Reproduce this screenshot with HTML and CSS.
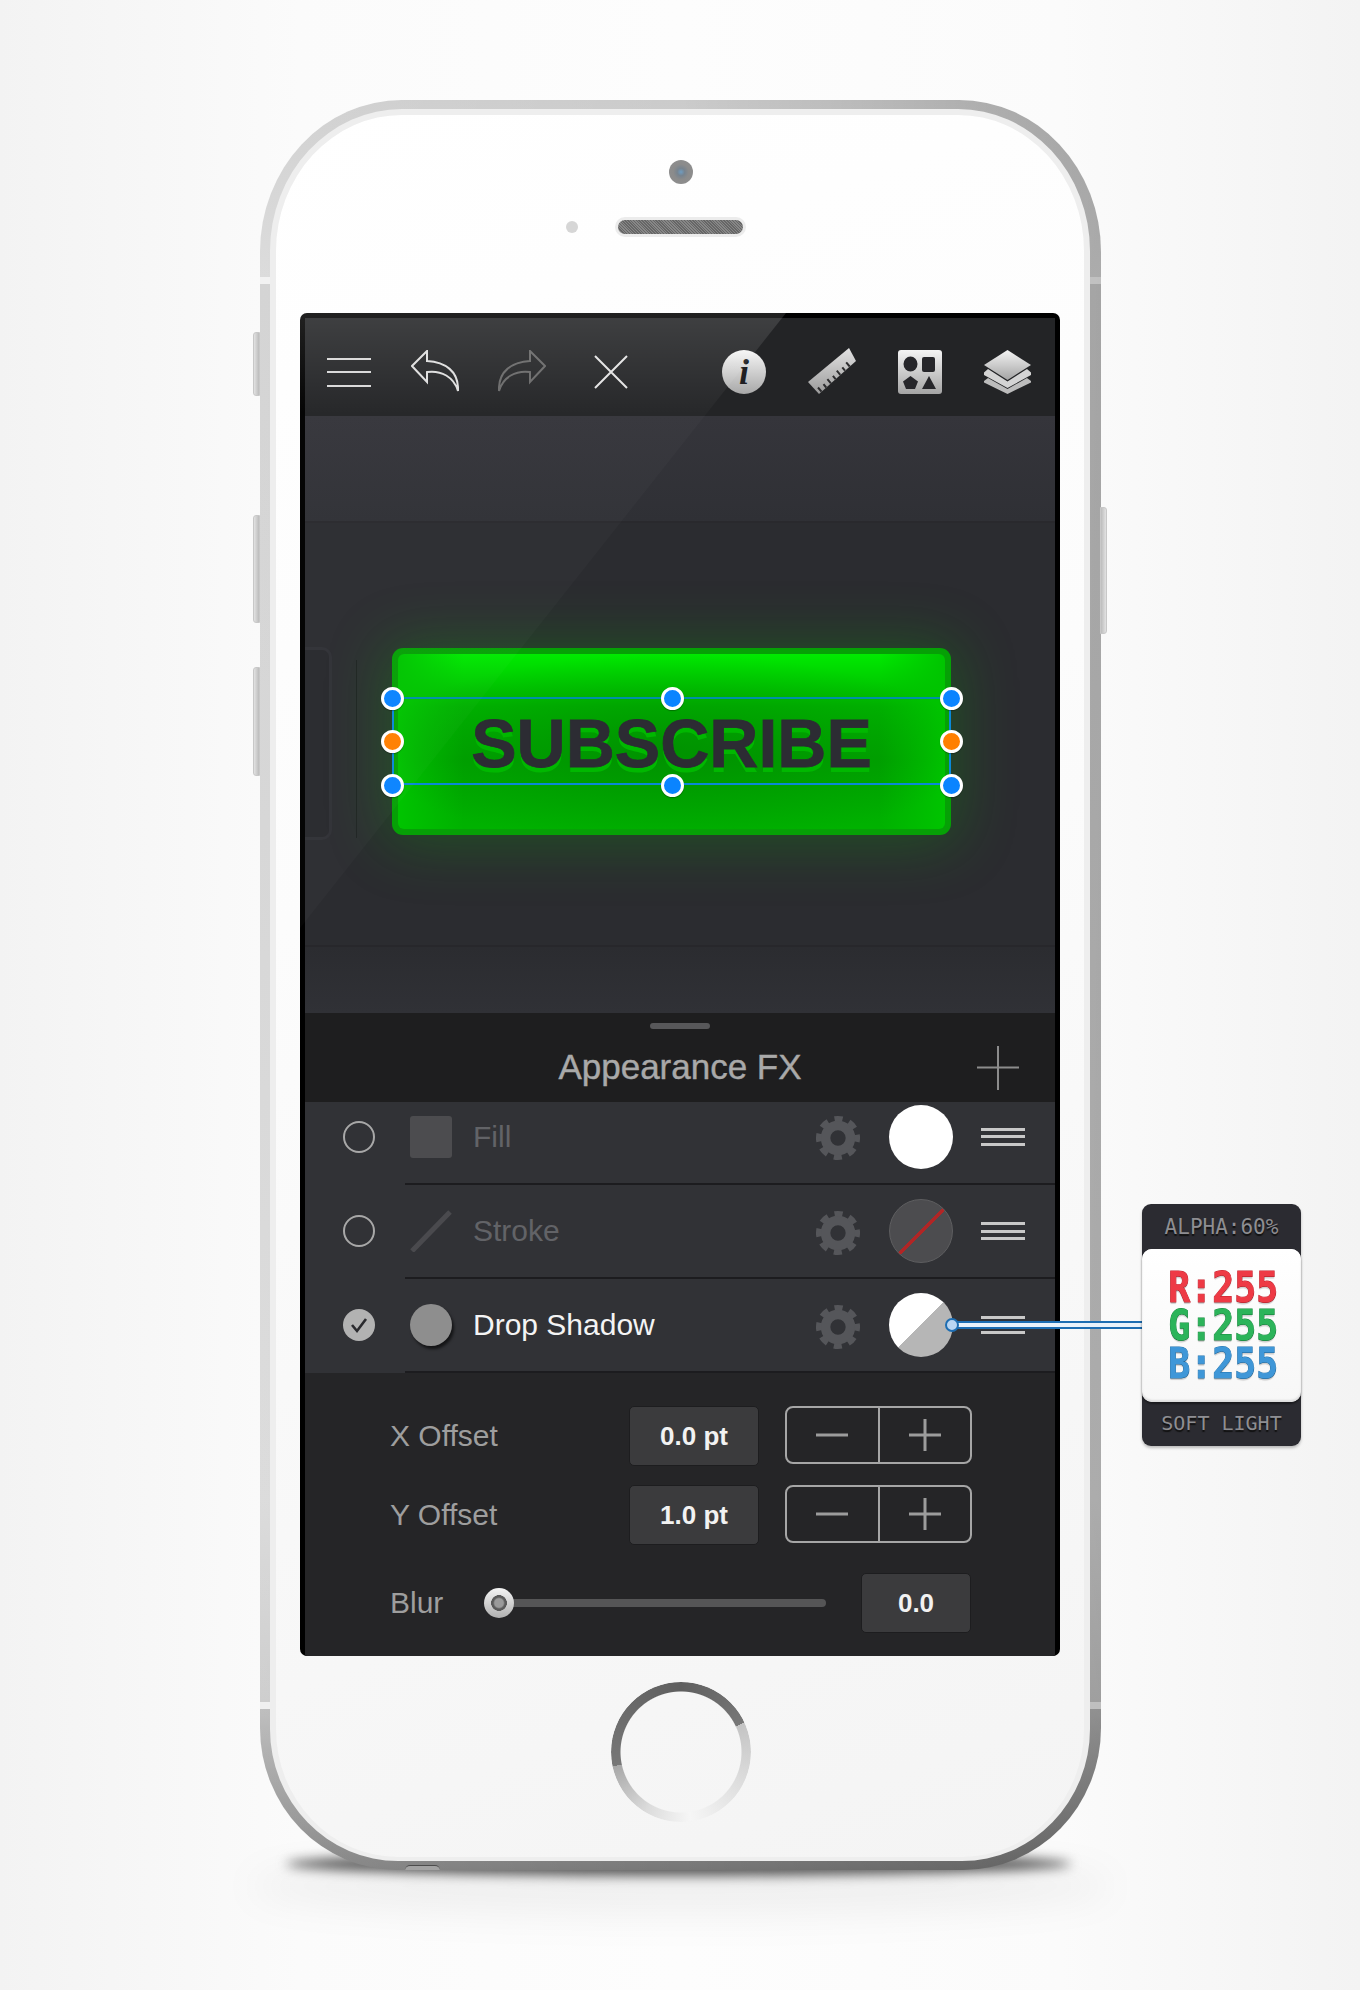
FILE: index.html
```html
<!DOCTYPE html>
<html lang="en">
<head>
    <meta charset="UTF-8">
    <title>Appearance FX</title>
    <link rel="stylesheet" href="styles.css">
</head>
<body>

<svg class="defs" width="0" height="0">
    <defs>
        <linearGradient id="chrome" x1="0" y1="0" x2="0" y2="1">
            <stop offset="0" stop-color="#f4f4f4"/>
            <stop offset="1" stop-color="#a4a4a4"/>
        </linearGradient>
        <linearGradient id="rulerfill" gradientUnits="userSpaceOnUse" x1="0" y1="0" x2="0" y2="46">
            <stop offset="0" stop-color="#e2e2e2"/>
            <stop offset="1" stop-color="#9a9a9a"/>
        </linearGradient>
        <symbol id="gear" viewBox="0 0 48 48">
            <circle cx="24" cy="24" r="13" fill="none" stroke="currentColor" stroke-width="10"/>
            <circle cx="24" cy="24" r="20" fill="none" stroke="currentColor" stroke-width="6" stroke-dasharray="8.5 7.2" stroke-dashoffset="4.25"/>
        </symbol>
        <symbol id="plus" viewBox="0 0 32 32">
            <path d="M0 16H32M16 0V32" fill="none" stroke="currentColor" stroke-width="3"/>
        </symbol>
        <symbol id="minus" viewBox="0 0 32 32">
            <path d="M0 16H32" fill="none" stroke="currentColor" stroke-width="3"/>
        </symbol>
        <symbol id="arrow" viewBox="0 0 48 42">
            <path d="M16 1L1 16L16 32V22C30 20 43 27 47 41C48 21 34 12 16 11Z" fill="none" stroke="currentColor" stroke-width="2"/>
        </symbol>
    </defs>
</svg>

<div class="stage">
    <div class="phone">
        <span class="side-btn mute"></span>
        <span class="side-btn vol-up"></span>
        <span class="side-btn vol-down"></span>
        <span class="side-btn power"></span>
        <span class="jack"></span>

        <div class="bezel">
            <div class="camera"></div>
            <div class="speaker"></div>

            <div class="screen">
                <div class="toolbar">
                    <div class="tool-group">
                        <div class="menu-icon"><i></i><i></i><i></i></div>
                        <svg class="arrow-icon"><use href="#arrow"/></svg>
                        <svg class="arrow-icon redo"><use href="#arrow"/></svg>
                        <svg class="close-icon" viewBox="0 0 34 34"><path d="M1 1L33 33M33 1L1 33" stroke="#e4e4e4" stroke-width="2"/></svg>
                    </div>
                    <div class="tool-group right">
                        <div class="info-icon">i</div>
                        <svg class="ruler-icon" viewBox="0 0 48 46">
                            <path d="M0 34L41 0L48 13L11 46Z" fill="url(#rulerfill)"/>
                            <path d="M13.5 43.7L10 39.5M18.2 39.5L15.5 36.2M22.9 35.3L19.4 31.1M27.6 31.1L24.9 27.8M32.3 26.9L28.8 22.7M37 22.7L34.3 19.4M41.7 18.5L38.2 14.3" stroke="#2c2c2e" stroke-width="2"/>
                        </svg>
                        <svg class="shapes-icon" viewBox="0 0 44 44">
                            <rect width="44" height="44" rx="3" fill="url(#chrome)"/>
                            <ellipse cx="12.5" cy="14" rx="7" ry="7.5" fill="#26262a"/>
                            <rect x="24" y="7" width="13" height="15" rx="2" fill="#26262a"/>
                            <path d="M12.5 26L20 31.5L17 39H8L5 31.5Z" fill="#26262a"/>
                            <path d="M31 26L38 39H24Z" fill="#26262a"/>
                        </svg>
                        <svg class="layers-icon" viewBox="0 0 47 44">
                            <path d="M23.5 0L47 15L23.5 30L0 15Z" fill="url(#chrome)"/>
                            <path d="M4 19L23.5 31.5L43 19L47 22.5V25L23.5 38L0 25V22.5Z" fill="#d4d4d4"/>
                            <path d="M4 28L23.5 39L43 28L47 31V32.5L23.5 44L0 32.5V31Z" fill="#bcbcbc"/>
                        </svg>
                    </div>
                </div>

                <div class="canvas">
                    <div class="side-shape"></div>
                    <div class="side-rule"></div>
                    <div class="band top"></div>
                    <div class="artboard">
                        <div class="sub-btn">
                            <div class="sub-face">SUBSCRIBE</div>
                            <div class="sel-box"></div>
                            <span class="handle h1"></span><span class="handle h2"></span><span class="handle h3"></span>
                            <span class="handle orange h4"></span><span class="handle orange h5"></span>
                            <span class="handle h6"></span><span class="handle h7"></span><span class="handle h8"></span>
                        </div>
                    </div>
                    <div class="band bottom"></div>
                </div>

                <div class="panel-head">
                    <span class="grip"></span>
                    <h2>Appearance FX</h2>
                    <svg class="add-icon" viewBox="0 0 42 44"><path d="M0 21.5H42M21 0V44" stroke="#8c8c8c" stroke-width="2"/></svg>
                </div>

                <div class="fx-list">
                    <div class="fx-row first">
                        <div class="fx-radio"></div>
                        <div class="fx-body">
                            <div class="fx-thumb"><span class="thumb-fill"></span></div>
                            <span class="fx-label">Fill</span>
                            <svg class="gear"><use href="#gear"/></svg>
                            <span class="swatch white"></span>
                            <div class="drag"><i></i><i></i><i></i></div>
                        </div>
                    </div>
                    <div class="fx-row">
                        <div class="fx-radio"></div>
                        <div class="fx-body">
                            <div class="fx-thumb">
                                <svg class="thumb-stroke" viewBox="0 0 42 42"><path d="M2 41L40 2" stroke="#4a4a4e" stroke-width="5"/></svg>
                            </div>
                            <span class="fx-label">Stroke</span>
                            <svg class="gear"><use href="#gear"/></svg>
                            <span class="swatch none"></span>
                            <div class="drag"><i></i><i></i><i></i></div>
                        </div>
                    </div>
                    <div class="fx-row">
                        <div class="fx-radio on">
                            <svg viewBox="0 0 32 32"><path d="M9 16L14 22L23 10" fill="none" stroke="#2a2a2e" stroke-width="2.6"/></svg>
                        </div>
                        <div class="fx-body">
                            <div class="fx-thumb"><span class="thumb-shadow"></span></div>
                            <span class="fx-label active">Drop Shadow</span>
                            <svg class="gear"><use href="#gear"/></svg>
                            <span class="swatch split"></span>
                            <div class="drag"><i></i><i></i><i></i></div>
                        </div>
                    </div>
                </div>

                <div class="settings">
                    <div class="set-row">
                        <span class="set-label">X Offset</span>
                        <div class="value">0.0 pt</div>
                        <div class="stepper">
                            <div class="step"><svg><use href="#minus"/></svg></div>
                            <div class="step"><svg><use href="#plus"/></svg></div>
                        </div>
                    </div>
                    <div class="set-row">
                        <span class="set-label">Y Offset</span>
                        <div class="value">1.0 pt</div>
                        <div class="stepper">
                            <div class="step"><svg><use href="#minus"/></svg></div>
                            <div class="step"><svg><use href="#plus"/></svg></div>
                        </div>
                    </div>
                    <div class="set-row blur">
                        <span class="set-label short">Blur</span>
                        <div class="slider"><span class="knob"></span></div>
                        <div class="value small">0.0</div>
                    </div>
                </div>
                <div class="glare"></div>
            </div>

            <div class="home"><div class="home-ring"></div></div>
        </div>
    </div>

    <div class="connector"><span class="connector-dot"></span></div>

    <div class="tip">
        <div class="tip-head">ALPHA:60%</div>
        <div class="tip-card">
            <div class="rgb r">R:255</div>
            <div class="rgb g">G:255</div>
            <div class="rgb b">B:255</div>
        </div>
        <div class="tip-foot">SOFT LIGHT</div>
    </div>
</div>

</body>
</html>
```

FILE: styles.css
```css
html, body {
    margin: 0;
    height: 1990px;
    overflow: hidden;
}
body {
    background: linear-gradient(90deg, #f3f3f3 0, #fbfbfb 22%, #fdfdfd 50%, #fbfbfb 78%, #f3f3f3 100%);
    font-family: "Liberation Sans", Arial, sans-serif;
}
.defs {
    position: absolute;
}
.stage {
    position: relative;
    height: 1990px;
    padding: 100px 0 0 260px;
    box-sizing: border-box;
}

/* phone body */
.phone {
    position: relative;
    width: 841px;
    height: 1770px;
    box-sizing: border-box;
    padding: 9px 11px 9px 10px;
    border-radius: 142px 142px 138px 138px / 152px 152px 142px 142px;
    background:
        linear-gradient(90deg, rgba(255, 255, 255, 0.14) 0, rgba(255, 255, 255, 0) 50%, rgba(0, 0, 0, 0.2) 100%),
        linear-gradient(180deg, #cbcbcb 0, #d6d6d6 177px, #f0f0f0 177px, #f0f0f0 184px, #cdcdcd 184px, #d6d6d6 1400px, #c6c6c6 1602px, #eeeeee 1602px, #eeeeee 1609px, #b4b4b4 1609px, #8c8c8c 1720px, #777 100%);
}
.phone::before {
    content: "";
    position: absolute;
    left: 26px;
    right: 30px;
    bottom: -6px;
    height: 24px;
    border-radius: 50%;
    background: #5a5a5a;
    filter: blur(6px);
    z-index: -1;
}
.phone::after {
    content: "";
    position: absolute;
    left: -10px;
    right: -10px;
    bottom: -46px;
    height: 60px;
    background: rgba(0, 0, 0, 0.05);
    border-radius: 50%;
    filter: blur(18px);
    z-index: -2;
}
.side-btn {
    position: absolute;
    width: 7px;
    left: -7px;
    background: linear-gradient(90deg, #e2e2e2, #bcbcbc);
    border-radius: 3px 0 0 3px;
    border: 1px solid #c8c8c8;
    box-sizing: border-box;
}
.mute { top: 232px; height: 64px; }
.vol-up { top: 415px; height: 108px; }
.vol-down { top: 567px; height: 109px; }
.power {
    left: auto;
    right: -6px;
    top: 407px;
    height: 127px;
    border-radius: 0 3px 3px 0;
    background: linear-gradient(90deg, #bcbcbc, #e2e2e2);
}
.jack {
    position: absolute;
    left: 145px;
    bottom: 0;
    width: 35px;
    height: 5px;
    border-radius: 18px 18px 0 0;
    background: #a2a2a2;
    border-top: 1px solid #4c4c4c;
    box-sizing: border-box;
}
.bezel {
    height: 100%;
    box-sizing: border-box;
    border: solid #eeeeee;
    border-width: 6px 6px 4px;
    border-radius: 132px 132px 128px 128px / 142px 142px 132px 132px;
    background: linear-gradient(160deg, #ffffff 0, #fcfcfc 40%, #f4f4f4 100%);
    display: flex;
    flex-direction: column;
    align-items: center;
    padding-top: 45px;
}
.camera {
    width: 24px;
    height: 24px;
    margin-left: 2px;
    border-radius: 50%;
    background: radial-gradient(circle, #6f9cc0 0, #77838e 22%, #8b8b8b 45%, #909090 100%);
}
.speaker {
    position: relative;
    width: 125px;
    height: 14px;
    margin-top: 33px;
    border: 3px solid #ececec;
    border-radius: 10px;
    background: repeating-linear-gradient(45deg, #666 0, #666 1px, #878787 1px, #878787 2px);
    flex: none;
}
.speaker::before {
    content: "";
    position: absolute;
    left: -52px;
    top: 1px;
    width: 12px;
    height: 12px;
    border-radius: 50%;
    background: #d6d6d6;
}

/* screen */
.screen {
    position: relative;
    flex: none;
    width: 760px;
    height: 1343px;
    margin-top: 76px;
    box-sizing: border-box;
    padding: 5px 5px 0;
    background: #000;
    border-radius: 7px;
    display: flex;
    flex-direction: column;
    overflow: hidden;
}
.glare {
    position: absolute;
    left: 0;
    top: 0;
    width: 486px;
    height: 615px;
    clip-path: polygon(0 0, 100% 0, 0 100%);
    background: linear-gradient(180deg, rgba(255, 255, 255, 0.13) 0, rgba(255, 255, 255, 0.02) 100px, rgba(255, 255, 255, 0.02) 100%);
    pointer-events: none;
}
.toolbar {
    height: 98px;
    flex: none;
    box-sizing: border-box;
    background: #232426;
    display: flex;
    justify-content: space-between;
    align-items: center;
    padding: 10px 24px 0 22px;
}
.tool-group {
    display: flex;
    align-items: center;
}
.menu-icon {
    width: 44px;
    display: flex;
    flex-direction: column;
    gap: 11.5px;
}
.menu-icon i {
    height: 2px;
    background: #d8d8d8;
}
.arrow-icon {
    width: 48px;
    height: 42px;
    margin-left: 40px;
    color: #dedede;
    margin-top: -2px;
}
.redo {
    transform: scaleX(-1);
    color: #686868;
    margin-left: 39px;
}
.close-icon {
    width: 34px;
    height: 34px;
    margin-left: 48px;
}
.tool-group.right {
    gap: 42px;
}
.info-icon {
    width: 44px;
    height: 44px;
    border-radius: 50%;
    background: linear-gradient(180deg, #f6f6f6, #a8a8a8);
    color: #1f1f22;
    font: italic bold 36px/44px "Liberation Serif", serif;
    text-align: center;
}
.ruler-icon {
    width: 48px;
    height: 46px;
    margin-top: -2px;
}
.shapes-icon {
    width: 44px;
    height: 44px;
}
.layers-icon {
    width: 47px;
    height: 44px;
}

/* canvas */
.canvas {
    position: relative;
    height: 597px;
    flex: none;
    background: #2d2e32;
    display: flex;
    flex-direction: column;
}
.band {
    flex: none;
}
.band.top {
    height: 107px;
    background: linear-gradient(180deg, #35353b, #2f3035);
    border-bottom: 2px solid #29292d;
    box-sizing: border-box;
}
.band.bottom {
    height: 68px;
    background: linear-gradient(180deg, #2b2c30, #303136);
    border-top: 2px solid #27272b;
    box-sizing: border-box;
}
.artboard {
    flex: 1;
    padding: 125px 0 0 87px;
    background: #2b2c30;
}
.side-shape {
    position: absolute;
    left: 0;
    top: 231px;
    width: 27px;
    height: 193px;
    background: #28292d;
    border: 3px solid #303136;
    border-left: 0;
    border-radius: 0 10px 10px 0;
    box-sizing: border-box;
}
.side-rule {
    position: absolute;
    left: 51px;
    top: 244px;
    width: 1px;
    height: 178px;
    background: #1f2023;
}
.sub-btn {
    position: relative;
    width: 559px;
    height: 187px;
    box-sizing: border-box;
    padding: 6px;
    border-radius: 11px;
    background: #06a006;
    box-shadow: 0 2px 60px 6px rgba(0, 190, 0, 0.26);
}
.sub-face {
    height: 100%;
    border-radius: 6px;
    background:
        radial-gradient(ellipse 55% 55% at 50% 55%, rgba(0, 130, 0, 0.55), rgba(0, 130, 0, 0) 100%),
        linear-gradient(90deg, #00c400 0, rgba(0, 196, 0, 0) 12%, rgba(0, 196, 0, 0) 88%, #00c400 100%),
        linear-gradient(180deg, #00ea00 0, #00b400 30%, #00a400 60%, #00b200 100%);
    color: #2c2c33;
    font-size: 68px;
    font-weight: bold;
    line-height: 178px;
    text-align: center;
    -webkit-text-stroke: 0.8px #2c2c33;
    text-shadow: 0 5px 0 #00b800;
    box-sizing: border-box;
}
.sel-box {
    position: absolute;
    left: 0;
    right: 0;
    top: 49px;
    height: 88px;
    box-sizing: border-box;
    border: 2px solid #0a88d8;
    border-top-color: #0090a8;
}
.handle {
    position: absolute;
    width: 23px;
    height: 23px;
    box-sizing: border-box;
    border: 3px solid #fff;
    border-radius: 50%;
    background: #0a84ff;
    margin: -11.5px 0 0 -11.5px;
    box-shadow: 0 1px 1px rgba(0, 0, 0, 0.3);
}
.handle.orange {
    background: #ff7f00;
}
.h1 { left: 0; top: 50px; }
.h2 { left: 280px; top: 50px; }
.h3 { left: 559px; top: 50px; }
.h4 { left: 0; top: 93px; }
.h5 { left: 559px; top: 93px; }
.h6 { left: 0; top: 137px; }
.h7 { left: 280px; top: 137px; }
.h8 { left: 559px; top: 137px; }

/* panel header */
.panel-head {
    position: relative;
    height: 89px;
    flex: none;
    background: #1e1e1f;
    display: flex;
    align-items: center;
    justify-content: center;
}
.panel-head h2 {
    margin: 18px 0 0;
    font-size: 35px;
    font-weight: normal;
    color: #a9a9a9;
    -webkit-text-stroke: 0.4px #a9a9a9;
}
.grip {
    position: absolute;
    left: 345px;
    top: 10px;
    width: 60px;
    height: 6px;
    border-radius: 3px;
    background: #58585a;
}
.add-icon {
    position: absolute;
    left: 672px;
    top: 33px;
    width: 42px;
    height: 44px;
}

/* effect rows */
.fx-list {
    flex: none;
    background: #313236;
}
.fx-row {
    display: flex;
    height: 94px;
}
.fx-row.first {
    height: 83px;
}
.fx-row.first .fx-body {
    padding-bottom: 12px;
}
.fx-row.first .fx-radio {
    margin-top: 19px;
}
.fx-radio {
    flex: none;
    width: 32px;
    height: 32px;
    box-sizing: border-box;
    border: 2px solid #a8a8a8;
    border-radius: 50%;
    margin: 30px 30px 0 38px;
}
.fx-radio.on {
    background: #b2b2b2;
    border: 0;
}
.fx-radio svg {
    display: block;
}
.fx-body {
    flex: 1;
    display: flex;
    align-items: center;
    box-sizing: border-box;
    border-bottom: 2px solid #1c1c1f;
    padding-right: 30px;
}
.fx-thumb {
    flex: none;
    width: 42px;
    height: 42px;
    margin: 0 21px 0 5px;
}
.thumb-fill {
    display: block;
    height: 100%;
    background: #4c4c4f;
    border-radius: 3px;
}
.thumb-stroke {
    display: block;
}
.thumb-shadow {
    display: block;
    height: 100%;
    border-radius: 50%;
    background: #8e8e8e;
    box-shadow: 2px 3px 3px rgba(0, 0, 0, 0.6);
}
.fx-label {
    flex: 1;
    font-size: 30px;
    color: #626367;
}
.fx-label.active {
    color: #f4f4f4;
}
.gear {
    flex: none;
    width: 46px;
    height: 46px;
    color: #55565a;
    margin-top: 3px;
}
.swatch {
    flex: none;
    width: 64px;
    height: 64px;
    margin: 0 28px;
    border-radius: 50%;
    box-sizing: border-box;
}
.swatch.white {
    background: #fff;
}
.swatch.none {
    border: 1px solid #5e5e60;
    background: linear-gradient(135deg, #4c4c4f 48.5%, #b12626 48.5%, #b12626 52.5%, #4c4c4f 52.5%);
}
.swatch.split {
    background: linear-gradient(135deg, #fff 50%, #b6b6b6 50%);
}
.drag {
    flex: none;
    width: 44px;
    display: flex;
    flex-direction: column;
    gap: 4.5px;
}
.drag i {
    height: 3px;
    background: #c8c8c8;
}

/* settings */
.settings {
    flex: 1;
    background: #252527;
    padding: 33px 0 0 85px;
    display: flex;
    flex-direction: column;
    gap: 19px;
}
.set-row {
    display: flex;
    height: 60px;
    align-items: center;
}
.set-row.blur {
    margin-top: 9px;
}
.set-label {
    flex: none;
    width: 239px;
    font-size: 30px;
    color: #9e9e9e;
}
.set-label.short {
    width: 94px;
}
.value {
    flex: none;
    width: 130px;
    height: 60px;
    box-sizing: border-box;
    background: #3b3b3d;
    border: 1px solid #1d1d1f;
    border-radius: 5px;
    color: #f2f2f2;
    font-size: 26px;
    font-weight: bold;
    line-height: 58px;
    text-align: center;
}
.value.small {
    width: 110px;
    margin-left: 35px;
}
.stepper {
    flex: none;
    display: flex;
    align-self: flex-start;
    width: 187px;
    height: 58px;
    margin-left: 26px;
    box-sizing: border-box;
    border: 2px solid #a6a6a6;
    border-radius: 8px;
}
.step {
    flex: 1;
    display: flex;
    align-items: center;
    justify-content: center;
    color: #9c9c9c;
}
.step + .step {
    border-left: 2px solid #a6a6a6;
}
.step svg {
    width: 32px;
    height: 32px;
}
.slider {
    position: relative;
    flex: none;
    width: 327px;
    height: 8px;
    border-radius: 4px;
    background: #555556;
    margin-left: 15px;
}
.knob {
    position: absolute;
    left: -15px;
    top: -11px;
    width: 30px;
    height: 30px;
    border-radius: 50%;
    background: radial-gradient(circle, #9a9a9a 0, #9a9a9a 20%, #5a5a5a 28%, #5a5a5a 36%, rgba(0, 0, 0, 0) 38%), linear-gradient(180deg, #f4f4f4, #b0b0b0);
}

/* home button */
.home {
    flex: none;
    margin: 26px 0 0 2px;
}
.home-ring {
    width: 140px;
    height: 140px;
    border-radius: 50%;
    background: conic-gradient(#5f5f5f 0, #777 65deg, #c4c4c4 65deg, #dadada 110deg, #f6f6f6 172deg, #dcdcdc 210deg, #a8a8a8 258deg, #777 258deg, #6a6a6a 310deg, #5f5f5f 360deg);
    -webkit-mask: radial-gradient(circle, transparent 60px, #000 61px);
    mask: radial-gradient(circle, transparent 60px, #000 61px);
}

/* connector and color tooltip */
.connector {
    position: absolute;
    left: 952px;
    top: 1321px;
    width: 192px;
    height: 8px;
    box-sizing: border-box;
    background: #e9f2fb;
    border: solid #1d6db2;
    border-width: 2px 0;
}
.connector-dot {
    position: absolute;
    left: -7px;
    top: -5px;
    width: 14px;
    height: 14px;
    box-sizing: border-box;
    border: 2px solid #1d6db2;
    border-radius: 50%;
    background: #b9d5f2;
}
.tip {
    position: absolute;
    left: 1142px;
    top: 1204px;
    width: 159px;
    height: 242px;
    border-radius: 9px;
    background: #2b2b31;
    box-shadow: 0 2px 3px rgba(0, 0, 0, 0.25);
    display: flex;
    flex-direction: column;
    font-family: "DejaVu Sans Mono", "Liberation Mono", monospace;
    text-align: center;
}
.tip-head {
    height: 45px;
    font-size: 21px;
    line-height: 46px;
    color: #8e8e92;
    text-shadow: 0 2px 1px #111;
}
.tip-card {
    height: 153px;
    box-sizing: border-box;
    padding-top: 19px;
    border-radius: 10px;
    background: linear-gradient(180deg, #fff, #f7f7f7);
    box-shadow: inset 0 3px 1px #fff, inset 0 -2px 2px #ddd, 0 2px 2px rgba(0, 0, 0, 0.4);
}
.tip-foot {
    flex: 1;
    font-size: 20px;
    line-height: 42px;
    color: #8e8e92;
    text-shadow: 0 2px 1px #111;
}
.rgb {
    height: 38px;
    padding-left: 4px;
    font-size: 43px;
    font-weight: bold;
    line-height: 38px;
    transform: scaleX(0.85);
    paint-order: stroke fill;
    text-shadow: 0 2px 1px rgba(0, 0, 0, 0.18);
}
.rgb.r { color: #ee3a45; -webkit-text-stroke: 1px #c4202c; }
.rgb.g { color: #2cb45a; -webkit-text-stroke: 1px #14893c; }
.rgb.b { color: #3f97d8; -webkit-text-stroke: 1px #2272ad; }
```
